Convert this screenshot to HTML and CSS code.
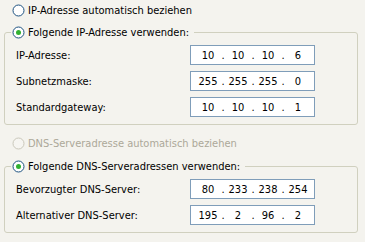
FILE: index.html
```html
<!DOCTYPE html>
<html lang="de">
<head>
    <meta charset="UTF-8">
    <title>TCP/IP Eigenschaften</title>
    <link rel="stylesheet" href="styles.css">
</head>
<body>
    <div class="opt first">
        <svg class="radio" width="13" height="13" viewBox="0 0 13 13"><circle cx="6.5" cy="6.5" r="5.5" class="ring"/></svg>
        <span>IP-Adresse automatisch beziehen</span>
    </div>
    <fieldset class="group">
        <legend class="opt">
            <svg class="radio" width="13" height="13" viewBox="0 0 13 13"><circle cx="6.5" cy="6.5" r="5.5" class="ring"/><circle cx="6.5" cy="6.5" r="2.5" class="dot"/></svg>
            <span>Folgende IP-Adresse verwenden:</span>
        </legend>
        <div class="row">
            <label>IP-Adresse:</label>
            <div class="ip"><span>10</span><i>.</i><span>10</span><i>.</i><span>10</span><i>.</i><span>6</span></div>
        </div>
        <div class="row">
            <label>Subnetzmaske:</label>
            <div class="ip"><span>255</span><i>.</i><span>255</span><i>.</i><span>255</span><i>.</i><span>0</span></div>
        </div>
        <div class="row">
            <label>Standardgateway:</label>
            <div class="ip"><span>10</span><i>.</i><span>10</span><i>.</i><span>10</span><i>.</i><span>1</span></div>
        </div>
    </fieldset>
    <div class="opt off">
        <svg class="radio" width="13" height="13" viewBox="0 0 13 13"><circle cx="6.5" cy="6.5" r="5.5" class="ring"/></svg>
        <span>DNS-Serveradresse automatisch beziehen</span>
    </div>
    <fieldset class="group dns">
        <legend class="opt">
            <svg class="radio" width="13" height="13" viewBox="0 0 13 13"><circle cx="6.5" cy="6.5" r="5.5" class="ring"/><circle cx="6.5" cy="6.5" r="2.5" class="dot"/></svg>
            <span>Folgende DNS-Serveradressen verwenden:</span>
        </legend>
        <div class="row">
            <label>Bevorzugter DNS-Server:</label>
            <div class="ip"><span>80</span><i>.</i><span>233</span><i>.</i><span>238</span><i>.</i><span>254</span></div>
        </div>
        <div class="row">
            <label>Alternativer DNS-Server:</label>
            <div class="ip"><span>195</span><i>.</i><span>2</span><i>.</i><span>96</span><i>.</i><span>2</span></div>
        </div>
    </fieldset>
</body>
</html>
```

FILE: styles.css
```css
* {
	margin: 0px;
	padding: 0px;
	box-sizing: border-box;
}
body {
	background-color: #f4f3ee;
	font-family: "DejaVu Sans Condensed", "Liberation Sans", Arial, sans-serif;
	font-size: 11px;
	color: #000;
	padding-top: 3px;
	width: 365px;
	height: 242px;
	overflow: hidden;
}
.opt {
	display: flex;
	align-items: center;
	height: 15px;
	padding-left: 12px;
}
.opt span {
	margin-left: 3px;
}
.radio {
	flex: none;
}
.ring {
	fill: #fff;
	stroke: #1c5180;
	stroke-width: 1;
}
.dot {
	fill: #31b131;
}
.off {
	color: #aca899;
	margin-top: 11px;
}
.off .ring {
	stroke: #cac8bb;
	fill: #f6f5f1;
}
.group {
	border: 1px solid #d0d0bf;
	border-radius: 3px;
	margin: 7px 7px 0px 4px;
	padding: 6px 0px 7px 11px;
}
.dns {
	margin-top: 8px;
}
.group legend.opt {
	padding: 0px 5px 0px 1px;
	margin-left: -5px;
	height: 14px;
}
.row {
	display: grid;
	grid-template-columns: 174px 125px;
	align-items: center;
	margin-top: 6px;
}
.row:first-of-type {
	margin-top: 0px;
}
.ip {
	display: flex;
	height: 20px;
	border: 1px solid #7f9db9;
	background-color: #fff;
	padding-left: 5px;
	align-items: center;
}
.ip span {
	width: 24px;
	text-align: center;
}
.ip i {
	font-style: normal;
	width: 6px;
	text-align: center;
}
```
